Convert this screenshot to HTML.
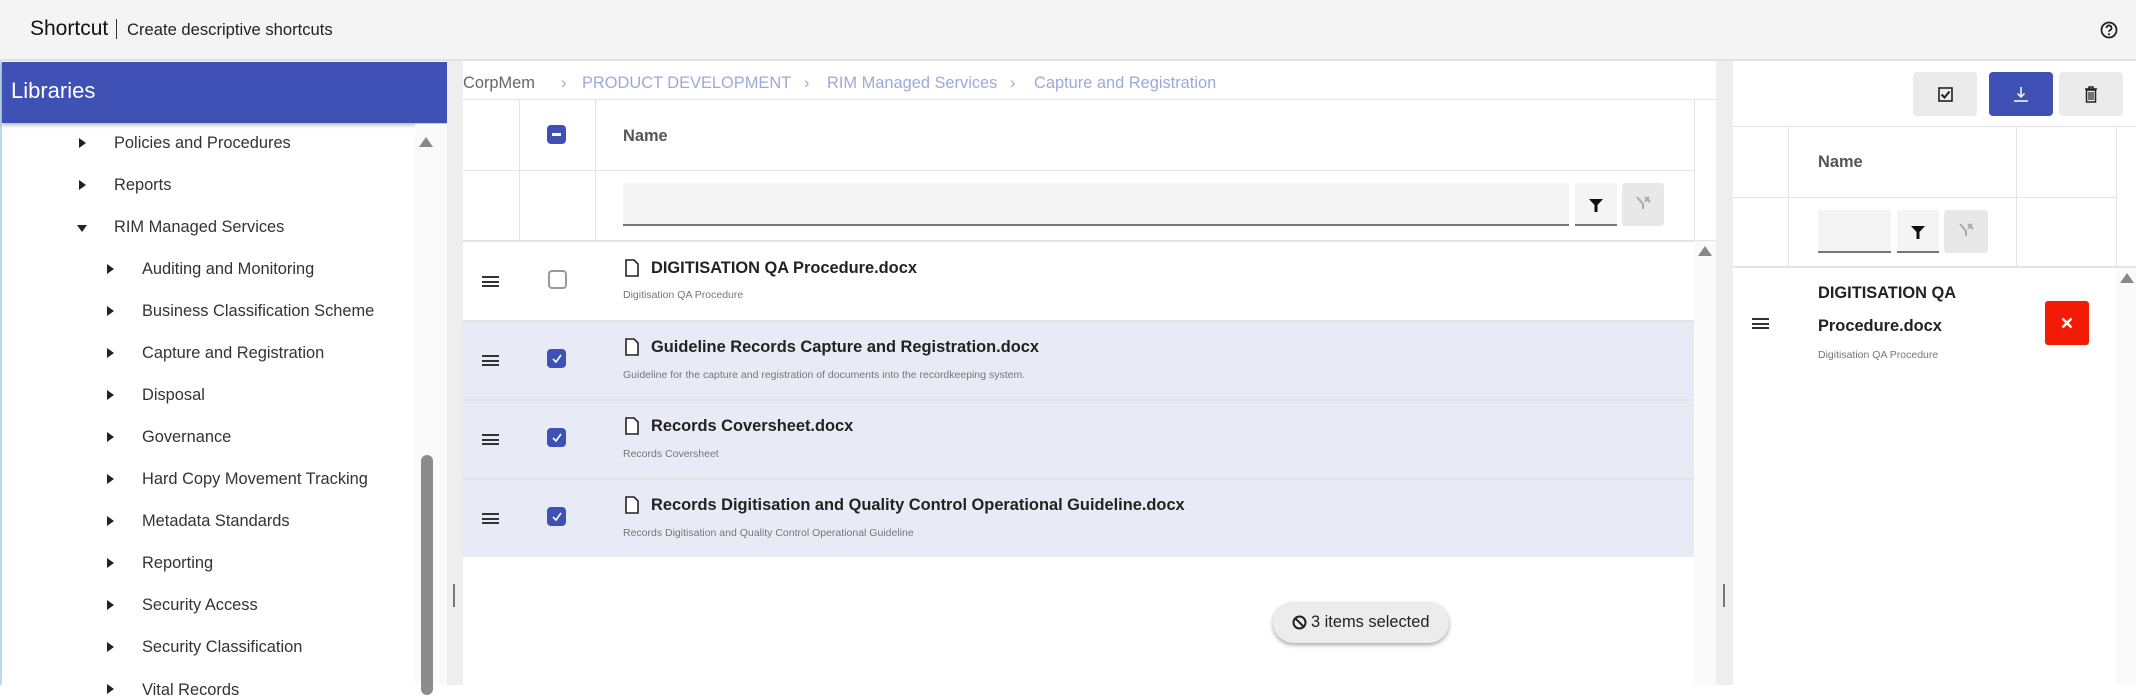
<!DOCTYPE html>
<html><head><meta charset="utf-8"><style>
*{box-sizing:border-box;margin:0;padding:0}
body{width:2136px;height:685px;overflow:hidden;background:#fff;font-family:"Liberation Sans",Arial,sans-serif;position:relative;color:#222}
.a{position:absolute}
.hdr{left:0;top:0;width:2136px;height:61px;background:#f4f4f4;border-bottom:2px solid #e2e2e2}
.tree{font-size:16.4px;color:#333}
.tri{width:0;height:0;border-top:5px solid transparent;border-bottom:5px solid transparent;border-left:7px solid #222}
.trid{width:0;height:0;border-left:5px solid transparent;border-right:5px solid transparent;border-top:7px solid #222}
.vl{width:1px;background:#e4e4e4}
.hl{height:1px;background:#e4e4e4}
.ham{width:17px;height:11px;border-top:2px solid #333;border-bottom:2px solid #333}
.ham:after{content:"";position:absolute;left:0;top:2.5px;width:17px;height:2px;background:#333}
.cb{width:19px;height:19px;border-radius:4px;background:#3f51b5}
.cb svg{position:absolute;left:3px;top:3px}
.doc{width:14px;height:18px}
.t{font-weight:bold;font-size:16.4px;color:#222}
.s{font-size:10.5px;color:#777}
.sel{background:#e8eaf6}
.upa{width:0;height:0;border-left:7px solid transparent;border-right:7px solid transparent;border-bottom:10px solid #888}
.bc{font-size:16.4px;color:#9fa8da;top:74px}
</style></head><body>
<div class="a hdr"></div>
<div class="a" style="left:30px;top:17px;font-size:21px;color:#111">Shortcut</div>
<div class="a" style="left:116px;top:19px;width:1px;height:20px;background:#333"></div>
<div class="a" style="left:127px;top:20px;font-size:16.6px;color:#222">Create descriptive shortcuts</div>
<svg class="a" style="left:2100px;top:21px" width="18" height="18" viewBox="0 0 18 18"><circle cx="9" cy="9" r="7.5" fill="none" stroke="#222" stroke-width="1.8"/><path d="M6.5 7a2.5 2.5 0 1 1 3.3 2.3c-.6.3-.8.7-.8 1.4" fill="none" stroke="#222" stroke-width="1.8"/><circle cx="9" cy="13.2" r="1.1" fill="#222"/></svg>

<!-- left panel -->
<div class="a" style="left:0;top:61px;width:2px;height:624px;background:#bcd7f0"></div>
<div class="a" style="left:2px;top:62px;width:446px;height:61px;background:#3f51b5;box-shadow:0 2px 4px rgba(0,0,0,.3)"></div>
<div class="a" style="left:11px;top:78px;font-size:22px;color:#fff">Libraries</div>
<div class="a" style="left:415px;top:124px;width:32px;height:561px;background:#fafafa"></div>
<div class="a upa" style="left:419px;top:137px"></div>
<div class="a" style="left:421px;top:455px;width:12px;height:240px;border-radius:6px;background:#8c8c8c"></div>
<div class="a" style="left:447px;top:61px;width:16px;height:624px;background:#eeeeee"></div>
<div class="a" style="left:453px;top:584px;width:2px;height:23px;background:#777"></div>
<div class="tree">
<div class="a tri" style="left:79px;top:138px"></div><div class="a" style="left:114px;top:134px">Policies and Procedures</div>
<div class="a tri" style="left:79px;top:180px"></div><div class="a" style="left:114px;top:176px">Reports</div>
<div class="a trid" style="left:77px;top:225px"></div><div class="a" style="left:114px;top:218px">RIM Managed Services</div>
<div class="a tri" style="left:107px;top:264px"></div><div class="a" style="left:142px;top:260px">Auditing and Monitoring</div>
<div class="a tri" style="left:107px;top:306px"></div><div class="a" style="left:142px;top:302px">Business Classification Scheme</div>
<div class="a tri" style="left:107px;top:348px"></div><div class="a" style="left:142px;top:344px">Capture and Registration</div>
<div class="a tri" style="left:107px;top:390px"></div><div class="a" style="left:142px;top:386px">Disposal</div>
<div class="a tri" style="left:107px;top:432px"></div><div class="a" style="left:142px;top:428px">Governance</div>
<div class="a tri" style="left:107px;top:474px"></div><div class="a" style="left:142px;top:470px">Hard Copy Movement Tracking</div>
<div class="a tri" style="left:107px;top:516px"></div><div class="a" style="left:142px;top:512px">Metadata Standards</div>
<div class="a tri" style="left:107px;top:558px"></div><div class="a" style="left:142px;top:554px">Reporting</div>
<div class="a tri" style="left:107px;top:600px"></div><div class="a" style="left:142px;top:596px">Security Access</div>
<div class="a tri" style="left:107px;top:642px"></div><div class="a" style="left:142px;top:638px">Security Classification</div>
<div class="a tri" style="left:107px;top:684px"></div><div class="a" style="left:142px;top:681px">Vital Records</div>
</div>

<!-- middle panel -->
<div class="a" style="left:463px;top:74px;font-size:16.4px;color:#666">CorpMem</div>
<div class="a bc" style="left:561px">›</div>
<div class="a bc" style="left:582px">PRODUCT DEVELOPMENT</div>
<div class="a bc" style="left:804px">›</div>
<div class="a bc" style="left:827px">RIM Managed Services</div>
<div class="a bc" style="left:1010px">›</div>
<div class="a bc" style="left:1034px">Capture and Registration</div>
<div class="a hl" style="left:463px;top:99px;width:1253px"></div>
<div class="a hl" style="left:463px;top:170px;width:1231px"></div>
<div class="a hl" style="left:463px;top:240px;width:1253px;height:2px"></div>
<div class="a vl" style="left:519px;top:99px;height:142px"></div>
<div class="a vl" style="left:595px;top:99px;height:142px"></div>
<div class="a vl" style="left:1694px;top:99px;height:142px"></div>
<div class="a cb" style="left:547px;top:125px"><div class="a" style="left:5px;top:8px;width:9px;height:3px;background:#fff"></div></div>
<div class="a" style="left:623px;top:127px;font-size:16.4px;font-weight:bold;color:#555">Name</div>
<div class="a" style="left:623px;top:183px;width:946px;height:43px;background:#f4f4f4;border-bottom:2px solid #777"></div>
<div class="a" style="left:1575px;top:183px;width:42px;height:43px;background:#f4f4f4;border-bottom:2px solid #777"></div>
<svg class="a" style="left:1588px;top:197px" width="16" height="16" viewBox="0 0 16 16"><path d="M1 2h14l-5.5 6v7h-3V8z" fill="#111"/></svg>
<div class="a" style="left:1622px;top:183px;width:42px;height:43px;background:#e8e8e8;border-radius:3px"></div>
<svg class="a" style="left:1634px;top:194px" width="18" height="18" viewBox="0 0 18 18"><path d="M3 3l6 7v5M15 3l-4 4.5M11 3l5 5" fill="none" stroke="#aaa" stroke-width="2"/></svg>

<div class="a sel" style="left:463px;top:320px;width:1231px;height:237px"></div>
<div class="a hl" style="left:463px;top:320px;width:1231px;height:2px"></div>
<div class="a hl" style="left:463px;top:399px;width:1231px;height:2px"></div>
<div class="a hl" style="left:463px;top:478px;width:1231px;height:2px"></div>
<div class="a" style="left:1694px;top:241px;width:22px;height:444px;background:#fafafa"></div>
<div class="a upa" style="left:1698px;top:246px"></div>

<!-- rows -->
<div class="a ham" style="left:482px;top:276px"></div>
<div class="a" style="left:548px;top:270px;width:19px;height:19px;border:2px solid #999;border-radius:4px;background:#fff"></div>
<svg class="a doc" style="left:625px;top:259px" viewBox="0 0 14 18"><path d="M1 1h8l4 4v12H1z" fill="#fff" stroke="#222" stroke-width="1.6"/></svg>
<div class="a t" style="left:651px;top:259px">DIGITISATION QA Procedure.docx</div>
<div class="a s" style="left:623px;top:289px">Digitisation QA Procedure</div>

<div class="a ham" style="left:482px;top:355px"></div>
<div class="a cb" style="left:547px;top:349px"><svg width="13" height="13" viewBox="0 0 13 13"><path d="M3 7l3 3 5-7" fill="none" stroke="#fff" stroke-width="1.6"/></svg></div>
<svg class="a doc" style="left:625px;top:338px" viewBox="0 0 14 18"><path d="M1 1h8l4 4v12H1z" fill="#fff" stroke="#222" stroke-width="1.6"/></svg>
<div class="a t" style="left:651px;top:338px">Guideline Records Capture and Registration.docx</div>
<div class="a s" style="left:623px;top:369px">Guideline for the capture and registration of documents into the recordkeeping system.</div>

<div class="a ham" style="left:482px;top:434px"></div>
<div class="a cb" style="left:547px;top:428px"><svg width="13" height="13" viewBox="0 0 13 13"><path d="M3 7l3 3 5-7" fill="none" stroke="#fff" stroke-width="1.6"/></svg></div>
<svg class="a doc" style="left:625px;top:417px" viewBox="0 0 14 18"><path d="M1 1h8l4 4v12H1z" fill="#fff" stroke="#222" stroke-width="1.6"/></svg>
<div class="a t" style="left:651px;top:417px">Records Coversheet.docx</div>
<div class="a s" style="left:623px;top:448px">Records Coversheet</div>

<div class="a ham" style="left:482px;top:513px"></div>
<div class="a cb" style="left:547px;top:507px"><svg width="13" height="13" viewBox="0 0 13 13"><path d="M3 7l3 3 5-7" fill="none" stroke="#fff" stroke-width="1.6"/></svg></div>
<svg class="a doc" style="left:625px;top:496px" viewBox="0 0 14 18"><path d="M1 1h8l4 4v12H1z" fill="#fff" stroke="#222" stroke-width="1.6"/></svg>
<div class="a t" style="left:651px;top:496px">Records Digitisation and Quality Control Operational Guideline.docx</div>
<div class="a s" style="left:623px;top:527px">Records Digitisation and Quality Control Operational Guideline</div>

<!-- toast -->
<div class="a" style="left:1273px;top:602px;width:176px;height:41px;border-radius:21px;background:#ececec;box-shadow:0 2px 4px rgba(0,0,0,.35)"></div>
<svg class="a" style="left:1292px;top:615px" width="15" height="15" viewBox="0 0 15 15"><circle cx="7.5" cy="7.5" r="6" fill="none" stroke="#222" stroke-width="2"/><path d="M3.5 3.5l8 8" stroke="#222" stroke-width="2"/></svg>
<div class="a" style="left:1311px;top:613px;font-size:16.4px;color:#222">3 items selected</div>

<!-- right splitter & panel -->
<div class="a" style="left:1716px;top:61px;width:17px;height:624px;background:#eeeeee"></div>
<div class="a" style="left:1723px;top:584px;width:2px;height:23px;background:#777"></div>
<div class="a" style="left:1913px;top:72px;width:64px;height:44px;border-radius:4px;background:#ebebeb"></div>
<svg class="a" style="left:1938px;top:87px" width="15" height="15" viewBox="0 0 15 15"><rect x="1" y="1" width="13" height="13" fill="none" stroke="#222" stroke-width="1.6"/><path d="M3.5 7.5l3 3 5-6" fill="none" stroke="#222" stroke-width="2"/></svg>
<div class="a" style="left:1989px;top:72px;width:64px;height:44px;border-radius:4px;background:#3f51b5"></div>
<svg class="a" style="left:2013px;top:86px" width="16" height="16" viewBox="0 0 16 16"><path d="M8 1v10M4.5 7.5L8 11l3.5-3.5" fill="none" stroke="#fff" stroke-width="1.5"/><path d="M1 15h14" stroke="#fff" stroke-width="1.5"/></svg>
<div class="a" style="left:2059px;top:72px;width:64px;height:44px;border-radius:4px;background:#ebebeb"></div>
<svg class="a" style="left:2084px;top:86px" width="14" height="17" viewBox="0 0 14 17"><path d="M1 3h12M5 3V1h4v2M2.5 4h9v12h-9z" fill="none" stroke="#222" stroke-width="1.5"/><path d="M5 6v8M7 6v8M9 6v8" stroke="#222" stroke-width="1.2"/></svg>
<div class="a hl" style="left:1733px;top:126px;width:403px"></div>
<div class="a hl" style="left:1733px;top:197px;width:384px"></div>
<div class="a hl" style="left:1733px;top:266px;width:403px;height:2px"></div>
<div class="a vl" style="left:1788px;top:127px;height:140px"></div>
<div class="a vl" style="left:2016px;top:127px;height:140px"></div>
<div class="a vl" style="left:2116px;top:127px;height:140px"></div>
<div class="a" style="left:1818px;top:153px;font-size:16.4px;font-weight:bold;color:#555">Name</div>
<div class="a" style="left:1818px;top:210px;width:73px;height:43px;background:#f4f4f4;border-bottom:2px solid #777"></div>
<div class="a" style="left:1897px;top:210px;width:42px;height:43px;background:#f4f4f4;border-bottom:2px solid #777"></div>
<svg class="a" style="left:1910px;top:224px" width="16" height="16" viewBox="0 0 16 16"><path d="M1 2h14l-5.5 6v7h-3V8z" fill="#111"/></svg>
<div class="a" style="left:1944px;top:210px;width:44px;height:43px;background:#e8e8e8;border-radius:3px"></div>
<svg class="a" style="left:1957px;top:221px" width="18" height="18" viewBox="0 0 18 18"><path d="M3 3l6 7v5M15 3l-4 4.5M11 3l5 5" fill="none" stroke="#aaa" stroke-width="2"/></svg>
<div class="a" style="left:2116px;top:268px;width:20px;height:417px;background:#fafafa"></div>
<div class="a upa" style="left:2120px;top:273px"></div>
<div class="a ham" style="left:1752px;top:318px"></div>
<div class="a t" style="left:1818px;top:284px">DIGITISATION QA</div>
<div class="a t" style="left:1818px;top:317px">Procedure.docx</div>
<div class="a s" style="left:1818px;top:349px">Digitisation QA Procedure</div>
<div class="a" style="left:2045px;top:301px;width:44px;height:44px;border-radius:3px;background:#f41b06"></div>
<svg class="a" style="left:2061px;top:317px" width="12" height="12" viewBox="0 0 12 12"><path d="M1.5 1.5l9 9M10.5 1.5l-9 9" stroke="#fff" stroke-width="2.4"/></svg>
</body></html>
